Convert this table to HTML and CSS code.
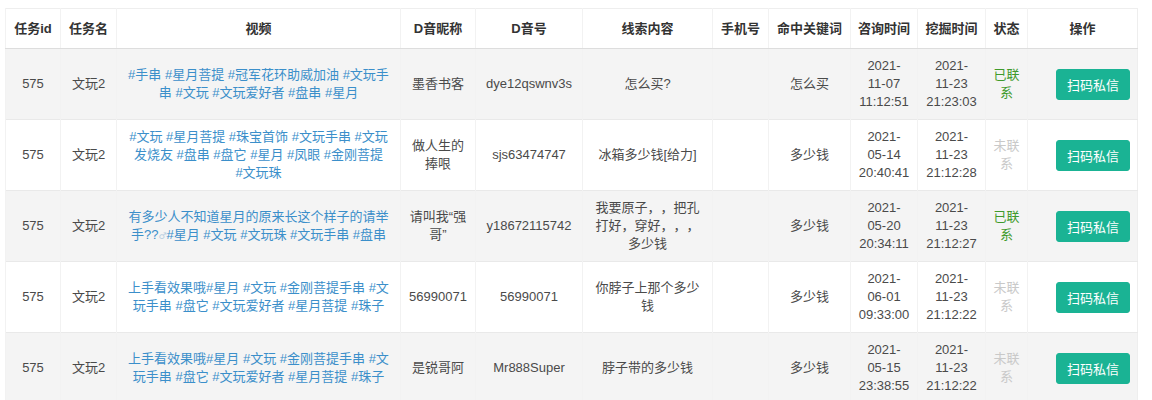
FILE: index.html
```html
<!DOCTYPE html>
<html lang="zh-CN">
<head>
<meta charset="utf-8">
<title>线索列表</title>
<link rel="stylesheet" href="styles.css">
</head>
<body>
<div class="wrap">
<table class="grid">
  <colgroup>
    <col class="c-id"><col class="c-name"><col class="c-video"><col class="c-nick"><col class="c-dy">
    <col class="c-clue"><col class="c-phone"><col class="c-kw"><col class="c-t1"><col class="c-t2">
    <col class="c-st"><col class="c-op">
  </colgroup>
  <thead>
    <tr>
      <th>任务id</th><th>任务名</th><th>视频</th><th>D音昵称</th><th>D音号</th><th>线索内容</th>
      <th>手机号</th><th>命中关键词</th><th>咨询时间</th><th>挖掘时间</th><th>状态</th><th>操作</th>
    </tr>
  </thead>
  <tbody>
    <tr>
      <td>575</td><td>文玩2</td>
      <td><a class="vlink" href="#">#手串 #星月菩提 #冠军花环助威加油 #文玩手串 #文玩 #文玩爱好者 #盘串 #星月</a></td>
      <td>墨香书客</td><td>dye12qswnv3s</td><td>怎么买?</td><td></td><td>怎么买</td>
      <td class="t1">2021-11-07 11:12:51</td><td class="t2">2021-11-23 21:23:03</td>
      <td class="st"><span class="st-on">已联系</span></td>
      <td><button class="btn">扫码私信</button></td>
    </tr>
    <tr>
      <td>575</td><td>文玩2</td>
      <td><a class="vlink" href="#">#文玩 #星月菩提 #珠宝首饰 #文玩手串 #文玩发烧友 #盘串 #盘它 #星月 #凤眼 #金刚菩提 <span class="nw">#文玩珠</span></a></td>
      <td>做人生的捧哏</td><td>sjs63474747</td><td>冰箱多少钱[给力]</td><td></td><td>多少钱</td>
      <td class="t1">2021-05-14 20:40:41</td><td class="t2">2021-11-23 21:12:28</td>
      <td class="st"><span class="st-off">未联系</span></td>
      <td><button class="btn">扫码私信</button></td>
    </tr>
    <tr>
      <td>575</td><td>文玩2</td>
      <td><a class="vlink" href="#">有多少人不知道星月的原来长这个样子的请举手??<span class="sym">♂</span>#星月 #文玩 #文玩珠 #文玩手串 #盘串</a></td>
      <td>请叫我“强哥”</td><td>y18672115742</td><td class="clue">我要原子，，把孔打好，穿好，，，多少钱</td><td></td><td>多少钱</td>
      <td class="t1">2021-05-20 20:34:11</td><td class="t2">2021-11-23 21:12:27</td>
      <td class="st"><span class="st-on">已联系</span></td>
      <td><button class="btn">扫码私信</button></td>
    </tr>
    <tr>
      <td>575</td><td>文玩2</td>
      <td><a class="vlink" href="#">上手看效果哦#星月 #文玩 #金刚菩提手串 #文玩手串 #盘它 #文玩爱好者 #星月菩提 #珠子</a></td>
      <td>56990071</td><td>56990071</td><td>你脖子上那个多少钱</td><td></td><td>多少钱</td>
      <td class="t1">2021-06-01 09:33:00</td><td class="t2">2021-11-23 21:12:22</td>
      <td class="st"><span class="st-off">未联系</span></td>
      <td><button class="btn">扫码私信</button></td>
    </tr>
    <tr>
      <td>575</td><td>文玩2</td>
      <td><a class="vlink" href="#">上手看效果哦#星月 #文玩 #金刚菩提手串 #文玩手串 #盘它 #文玩爱好者 #星月菩提 #珠子</a></td>
      <td>是锐哥阿</td><td>Mr888Super</td><td>脖子带的多少钱</td><td></td><td>多少钱</td>
      <td class="t1">2021-05-15 23:38:55</td><td class="t2">2021-11-23 21:12:22</td>
      <td class="st"><span class="st-off">未联系</span></td>
      <td><button class="btn">扫码私信</button></td>
    </tr>
  </tbody>
</table>
</div>
</body>
</html>
```

FILE: styles.css
```css
html, body {
  margin: 0;
  padding: 0;
  background: #ffffff;
}
body {
  font-family: "Liberation Sans", "Noto Sans CJK SC", sans-serif;
  font-size: 13px;
  color: #4a4a4a;
  text-spacing-trim: space-all;
}
.wrap {
  padding: 8px 15px 0 5px;
}
.grid {
  width: 1132px;
  table-layout: fixed;
  border-collapse: collapse;
  border: 1px solid #eeeeee;
}
.c-id { width: 55px; }
.c-name { width: 56px; }
.c-video { width: 284px; }
.c-nick { width: 75px; }
.c-dy { width: 107px; }
.c-clue { width: 130px; }
.c-phone { width: 56px; }
.c-kw { width: 82px; }
.c-t1 { width: 67px; }
.c-t2 { width: 68px; }
.c-st { width: 42px; }
.c-op { width: 110px; }

.grid th {
  font-weight: bold;
  color: #333333;
  padding: 8px 3px 7px;
  line-height: 24px;
  text-align: center;
  vertical-align: middle;
  white-space: nowrap;
  border-left: 1px solid #f2f2f2;
  border-bottom: 1px solid #dddddd;
  background: #ffffff;
}
.grid td {
  padding: 8px;
  line-height: 18px;
  text-align: center;
  vertical-align: middle;
  border-left: 1px solid #f2f2f2;
  border-top: 1px solid #e9e9e9;
  word-wrap: break-word;
}
.grid td.t1 {
  padding-left: 7.5px;
  padding-right: 7.5px;
}
.grid td.st {
  padding-left: 7px;
  padding-right: 7px;
}
.grid tbody tr:nth-child(odd) td {
  background: #f4f4f4;
}
.vlink {
  color: #3b8fca;
  text-decoration: none;
}
.nw {
  white-space: nowrap;
}
.sym {
  font-family: "DejaVu Sans", sans-serif;
  font-size: 9px;
  line-height: 9px;
  color: #b5cde0;
}
.st-on {
  color: #3f9a2c;
}
.st-off {
  color: #c9c9c9;
}
.btn {
  margin-left: 20px;
  width: 74px;
  height: 31px;
  padding: 0;
  font-family: inherit;
  font-size: 13px;
  color: #ffffff;
  background: #1ab394;
  border: 1px solid #1ab394;
  border-radius: 3px;
  cursor: pointer;
}
```
